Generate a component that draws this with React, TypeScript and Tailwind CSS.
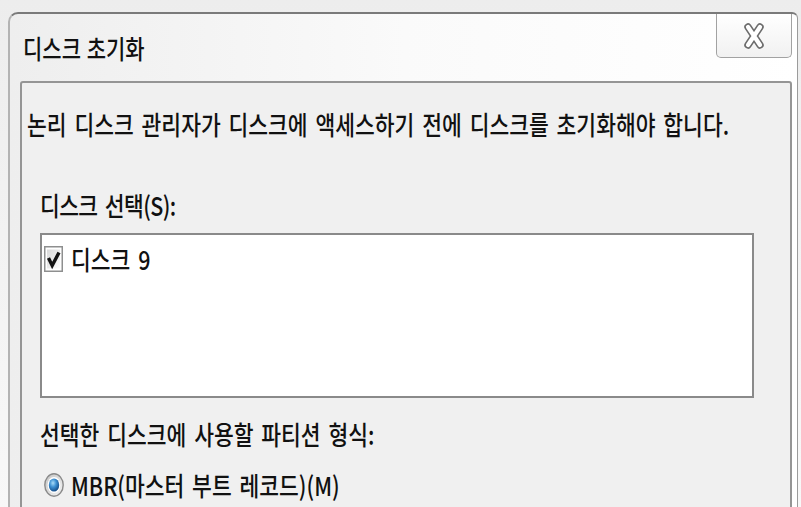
import React from "react";

function Label({ children }: { children: React.ReactNode }) {
  return (
    <span className="inline-block origin-center scale-y-[1.22] whitespace-nowrap leading-[28px]">
      {children}
    </span>
  );
}

function CloseGlyph() {
  return (
    <svg width="20" height="26" viewBox="0 0 20 26">
      <path
        d="M4 4 L16 22 M16 4 L4 22"
        fill="none"
        stroke="#6c6c6c"
        strokeWidth="7.5"
        strokeLinecap="round"
      />
      <path
        d="M4 4 L16 22 M16 4 L4 22"
        fill="none"
        stroke="#ffffff"
        strokeWidth="4.2"
        strokeLinecap="round"
      />
    </svg>
  );
}

function CheckBox() {
  return (
    <svg width="19" height="26" viewBox="0 0 19 26" className="shrink-0">
      <defs>
        <linearGradient id="cbFill" x1="0" y1="0" x2="1" y2="1">
          <stop offset="0" stopColor="#d9d9d9" />
          <stop offset="1" stopColor="#fbfbfb" />
        </linearGradient>
      </defs>
      <rect x="0.75" y="0.75" width="17.5" height="24.5" fill="#fff" stroke="#8e8f8f" strokeWidth="1.5" />
      <rect x="3" y="3.5" width="13" height="19" fill="url(#cbFill)" />
      <path d="M4.5 12 L8.2 19.5 L15 6.5" fill="none" stroke="#111" strokeWidth="3.4" strokeLinejoin="miter" />
    </svg>
  );
}

function Radio() {
  return (
    <svg width="20" height="24" viewBox="0 0 20 24" className="shrink-0">
      <defs>
        <radialGradient id="rdDot" cx="0.4" cy="0.35" r="0.7">
          <stop offset="0" stopColor="#a9dcf8" />
          <stop offset="0.45" stopColor="#3c8fd2" />
          <stop offset="1" stopColor="#10457f" />
        </radialGradient>
        <linearGradient id="rdRing" x1="0" y1="0" x2="1" y2="1">
          <stop offset="0" stopColor="#c4c4c4" />
          <stop offset="1" stopColor="#f5f5f5" />
        </linearGradient>
      </defs>
      <ellipse cx="10" cy="12" rx="9.2" ry="11.2" fill="url(#rdRing)" stroke="#8a8a8a" strokeWidth="1.4" />
      <ellipse cx="10" cy="12" rx="6.4" ry="8" fill="#fff" />
      <ellipse cx="10" cy="12" rx="5.2" ry="6.6" fill="url(#rdDot)" />
    </svg>
  );
}

export default function App() {
  return (
    <div className="h-[507px] w-[801px] overflow-hidden bg-gradient-to-b from-[#ededed] to-[#f8f8f8] pl-[8px] pr-[3px] pt-[12px] font-['Noto_Sans_CJK_KR',sans-serif] text-[21.5px] font-medium leading-[28px] text-[#111] [word-spacing:3px]">
      <div className="flex h-[520px] flex-col rounded-tl-[10px] rounded-tr-[6px] border-l-2 border-r border-t-2 border-l-[#b3b3b3] border-r-[#9b9b9b] border-t-[#7a7a7a] bg-gradient-to-r from-[#eeeeee] via-[#fafafa] to-white">
        {/* title bar */}
        <div className="flex h-[67px] shrink-0 items-start justify-between">
          <div className="pl-[13px] pt-[20px] text-[21px] [word-spacing:1px]">
            <Label>디스크 초기화</Label>
          </div>
          <button className="mr-[5px] flex h-[44px] w-[76px] items-center justify-center rounded-b-[5px] border border-t-0 border-[#a2a2a2] bg-gradient-to-b from-white to-[#f1f1f1]">
            <CloseGlyph />
          </button>
        </div>

        {/* client area */}
        <div className="ml-[10px] mr-[5px] flex flex-1 flex-col rounded-t-[3px] border-2 border-[#959595] bg-[#f0f0f0]">
          <div className="pl-[5px] pt-[27px]">
            <Label>논리 디스크 관리자가 디스크에 액세스하기 전에 디스크를 초기화해야 합니다.</Label>
          </div>

          <div className="mt-[53px] pl-[18px] tracking-[-0.6px]">
            <Label>디스크 선택(S):</Label>
          </div>

          <div className="ml-[18px] mt-[14px] h-[165px] w-[714px] border-2 border-[#8a8a8a] bg-white pl-[2px] pt-[10px]">
            <div className="flex items-center gap-[8px]">
              <CheckBox />
              <Label>디스크 9</Label>
            </div>
          </div>

          <div className="mt-[22px] pl-[18px]">
            <Label>선택한 디스크에 사용할 파티션 형식:</Label>
          </div>

          <div className="mt-[23px] flex items-center gap-[7px] pl-[22px]">
            <Radio />
            <Label>MBR(마스터 부트 레코드)(M)</Label>
          </div>
        </div>
      </div>
    </div>
  );
}
